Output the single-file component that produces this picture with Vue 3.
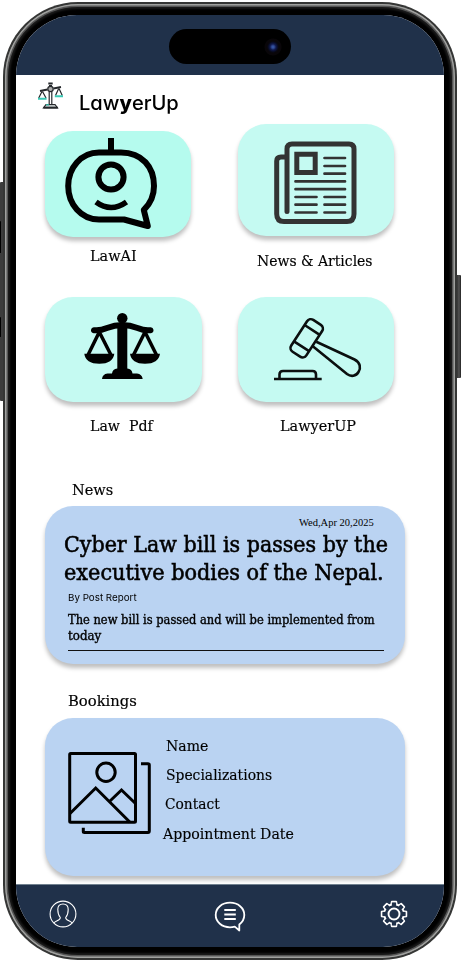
<script setup>
// Scales a single line of text horizontally so that it fills the given width.
const vFit = {
  mounted(el, { value }) {
    el.style.transform = `scaleX(${value / el.offsetWidth})`
  }
}
const fields = [
  { text: 'Name', width: 42 },
  { text: 'Specializations', width: 106.5 },
  { text: 'Contact', width: 55, shift: 'near' },
  { text: 'Appointment Date', width: 131, shift: 'far' }
]
const gearTeeth = [0, 45, 90, 135, 180, 225, 270, 315]
</script>

<template>
  <div class="stage">
    <i class="key action"></i><i class="key up"></i><i class="key down"></i><i class="key power"></i>
    <div class="phone">
      <div class="bezel">
        <main class="screen">
          <header class="status"><div class="island"><span class="camera"></span></div></header>

          <div class="brand">
            <svg class="logo" viewBox="37 81 28 29" fill="none" stroke="#25282b" stroke-width="1.2">
              <path d="M49.2 92V104M51.8 92V104M46 104.5H55L57.5 107.8H43.5Z" fill="#b9bfc0" />
              <path d="M43.5 107.6H57.8" stroke-width="1.8" />
              <path d="M48.3 83.5H52.7M49 86H52" stroke-width="2" />
              <circle cx="50.5" cy="89" r="2.7" fill="#aaa" />
              <path d="M40 91 47.5 89.5M53.5 88.5 61 87" stroke-width="1.8" />
              <path d="M42 91.5 38.7 98M42.5 91.5 46 98M58.7 88.5 55.5 95.5M59 88.5 62.3 95.5" />
              <path d="M38 98.8H46.6M54.8 96.3H63" stroke="#38c9b5" stroke-width="2" />
              <path d="M46 104.8H49" stroke="#38c9b5" />
            </svg>
            <h1 class="line" v-fit="100">Law<b>y</b>erUp</h1>
          </div>

          <section class="tiles">
            <div class="tile first">
              <svg class="card small" viewBox="45 131 145.5 105.5" fill="none" stroke="#000" stroke-width="6">
                <path d="M111 138V152" />
                <path d="M99 152.5H121C142 152.5 154 167 154 186C154 196 150 204 143.8 210L147.8 226L124 219.5H99C81 219.5 68.2 204 68.2 186C68.2 168 81 152.5 99 152.5Z" stroke-linejoin="round" />
                <circle cx="111" cy="177" r="12.6" />
                <path d="M96 202Q111 213 126.5 202" stroke-width="5.5" />
              </svg>
              <span class="line label l1" v-fit="47">LawAI</span>
            </div>
            <div class="tile">
              <svg class="card tall" viewBox="238 124 156.5 112" fill="none" stroke="#333" stroke-width="5" stroke-linecap="round">
                <path d="M285 157H281Q276.7 157 276.7 161V214Q276.7 221.5 284 221.5H347Q354 221.5 354 214V149Q354 144 349 144H292Q287 144 287 149V211.5" />
                <path d="M296.8 154.2H315.2V172.5H296.8Z" />
                <path d="M324.5 158H345M324.5 166H345M324.5 173.7H345M295.5 181.4H345M295.5 189.2H345M295.5 197H316.5M324.5 197H345M295.5 204.7H316.5M324.5 204.7H345M295.5 212.5H316.5M324.5 212.5H345" stroke-width="2.7" />
              </svg>
              <span class="line label l2" v-fit="116">News &amp; Articles</span>
            </div>
            <div class="tile">
              <svg class="card" viewBox="45 297 156.5 105">
                <circle cx="122.3" cy="318.2" r="5.2" />
                <path d="M117.3 323H127.3V368.5Q132 369 132.5 373.5H137Q142 374 142.7 379H102Q102.5 374 107.5 373.5H112Q112.5 369 117.3 368.5Z" />
                <path d="M94 330.2Q100 331 107 328Q122.3 322 137.5 328Q144.5 331 150.5 330.2" fill="none" stroke="#000" stroke-width="6" stroke-linecap="round" />
                <path d="M99.3 332 88 355M99.3 332 111 355M145 332 133.5 355M145 332 156.5 355" stroke="#000" stroke-width="3.5" />
                <path d="M84.3 353.7H114.3Q113 363.7 99.3 363.7T84.3 353.7ZM130 353.7H160Q158.5 363.7 145 363.7T130 353.7Z" />
              </svg>
              <span class="line label l3" v-fit="63">Law&nbsp; Pdf</span>
            </div>
            <div class="tile">
              <svg class="card" viewBox="238 297 156.5 105" fill="none" stroke="#0b0f0f" stroke-width="2.6">
                <g transform="translate(306.7 338.3) rotate(33)">
                  <rect x="-9" y="-19" width="18" height="38" rx="4.5" />
                  <path d="M-9-10H9M-9 9.5H9" />
                </g>
                <path d="M316.3 341.8 354.5 359.5C360.5 362.5 361 368 358.5 372C356 376.3 351 377 347 374L312.5 346" />
                <path d="M274 379H321.7M279.5 378V374.5Q279.5 371 283 371H312.5Q316 371 316 374.5V378" />
              </svg>
              <span class="line label l4" v-fit="76">LawyerUP</span>
            </div>
          </section>

          <h2 class="line heading news-heading" v-fit="41">News</h2>
          <article class="panel news">
            <time class="line" v-fit="75">Wed,Apr 20,2025</time>
            <h3>
              <span class="line" v-fit="324">Cyber Law bill is passes by the</span>
              <span class="line" v-fit="320">executive bodies of the Nepal.</span>
            </h3>
            <span class="line author" v-fit="69">By Post Report</span>
            <p>
              <span class="line" v-fit="307">The new bill is passed and will be implemented from</span>
              <span class="line" v-fit="33">today</span>
            </p>
            <hr>
          </article>

          <h2 class="line heading" v-fit="69">Bookings</h2>
          <article class="panel booking">
            <svg class="photo" viewBox="67 751 86 85" fill="none" stroke="#000" stroke-width="3">
              <rect x="69.7" y="753.5" width="65.8" height="68.7" rx="1" />
              <circle cx="106" cy="772.3" r="9.2" />
              <path d="M70 813.5 95.7 788 130 822.3M110 801 121.5 790 135.5 803.5" />
              <path d="M141 763.7H148Q149.3 763.7 149.3 765V831Q149.3 832.5 148 832.5H84.5Q83.3 832.5 83.3 831.5V827.7" />
            </svg>
            <ul>
              <li v-for="f in fields" :key="f.text" :class="f.shift">
                <span class="line" v-fit="f.width">{{ f.text }}</span>
              </li>
            </ul>
          </article>

          <footer class="nav">
            <svg class="ico" viewBox="0 0 32 32" fill="none" stroke="#fff" stroke-width="1.1">
              <circle cx="16" cy="16" r="12.9" />
              <path d="M6.8 25C9 22.5 13.5 22.5 13.3 19.5C11.5 17.5 10.8 14.5 10.8 11.5C10.8 8 12.5 6 16 6S21.2 8 21.2 11.5C21.2 14.5 20.5 17.5 18.7 19.5C18.5 22.5 23 22.5 25.2 25" />
            </svg>
            <svg class="ico chat" viewBox="0 0 34 34" fill="none" stroke="#fff" stroke-width="1.8">
              <path d="M26.3 32.5V26.5C29.5 24 31.3 20.8 31.3 17C31.3 10 25 4.700 17 4.700S2.700 10 2.700 17S9 29.300 17 29.300C18.800 29.300 20.300 29 21.800 28.600Z" stroke-linejoin="round" />
              <path d="M11.300 12H22.800M11.300 16.500H22.800M11.300 21H22.800" />
            </svg>
            <svg class="ico" viewBox="0 0 32 32" fill="none" stroke="#fff" stroke-width="1.9">
              <mask id="gear-body">
                <rect width="32" height="32" fill="#fff" stroke="none" />
                <circle cx="16" cy="16" r="8.8" fill="#000" stroke="none" />
                <path v-for="a in gearTeeth" :key="a" :transform="`rotate(${a} 16 16)`" d="M13.9 9V4.5H18.1V9Z" fill="#000" stroke="none" />
              </mask>
              <g mask="url(#gear-body)">
                <circle cx="16" cy="16" r="9.8" />
                <path v-for="a in gearTeeth" :key="a" :transform="`rotate(${a} 16 16)`" d="M13.2 7.5 13.8 3.7H18.2L18.8 7.5" stroke-linejoin="round" />
              </g>
              <circle cx="16" cy="16" r="5.5" />
            </svg>
          </footer>
        </main>
      </div>
    </div>
  </div>
</template>

<style>
body { background: #fff; }
</style>

<style scoped>
* { box-sizing: border-box; }
h1, h2, h3, p, ul, li { margin: 0; padding: 0; font-weight: 400; list-style: none; }
.stage { position: relative; width: 466px; height: 962px; padding: 2px 0 0 3px; overflow: hidden; font-family: "DejaVu Serif", serif; font-stretch: condensed; color: #000; }
.key { position: absolute; width: 4px; background: #3c3c3c; border-radius: 1px; }
.action { left: 0; top: 182px; height: 219px; }
.up { left: 0; top: 221px; width: 1px; height: 32px; background: #000; }
.down { left: 0; top: 317px; width: 1px; height: 20px; background: #000; }
.up, .down { z-index: 1; }
.power { right: 5px; top: 275px; width: 5px; height: 103px; background: linear-gradient(90deg, #222, #555 60%, #222); }
.phone { position: relative; width: 454px; height: 958px; border-radius: 75px; padding: 2px; background: #353635; }
.bezel { height: 100%; border-radius: 73px; padding: 11px; background: #000; box-shadow: inset 0 0 0 1.5px #a0a19f, inset 0 0 0 3px #555, inset 0 0 2px 5px #1b1b1b; }
.screen { width: 428px; height: 932px; border-radius: 61px; background: #fff; overflow: hidden; display: flex; flex-direction: column; }
.line { display: block; width: max-content; white-space: nowrap; transform-origin: left center; }
.status { height: 60px; flex: none; background: #20314a; padding: 14px 0 0 153px; }
.island { width: 122px; height: 35px; border-radius: 18px; background: #000; display: flex; align-items: center; justify-content: flex-end; padding-right: 9px; }
.camera { width: 18px; height: 18px; border-radius: 50%; background: radial-gradient(circle, #3452a0 0 1px, #10194d 3px, #07091a 5px, #090609 6px 8px, #000 9px); }
.brand { height: 49px; flex: none; display: flex; align-items: flex-start; gap: 14px; padding: 6px 0 0 21px; }
.logo { width: 28px; height: 29px; }
h1 { font-family: Inter, sans-serif; font-size: 19.5px; line-height: 28px; font-weight: 500; font-stretch: normal; font-feature-settings: "cv11"; margin-top: 7.5px; }
h1 b { font-weight: 800; }
.tiles { flex: none; display: grid; grid-template-columns: 192.5px 193px; grid-template-rows: 173px 183px; padding-left: 29px; }
.card { display: block; width: 156.5px; height: 105px; background: #c5faf2; border-radius: 28px; box-shadow: 0 4px 4px rgba(0, 0, 0, .25); }
.first { padding-top: 7px; }
.small { width: 145.5px; height: 105.5px; background: #b5fbee; }
.tall { height: 112px; }
.label, .heading, li { -webkit-text-stroke: .15px #000; }
.label { font-size: 15px; line-height: 20px; }
.l1 { margin: 9.5px 0 0 44.5px; }
.l2 { margin: 15px 0 0 19.5px; }
.l3 { margin: 13.5px 0 0 45px; }
.l4 { margin: 14px 0 0 42.5px; }
.heading { font-size: 15px; line-height: 20px; margin-left: 52px; }
.news-heading { margin-left: 56px; }
.panel { flex: none; width: 360px; height: 158px; margin-left: 29px; border-radius: 28px; background: #bad3f2; box-shadow: 0 4px 4px rgba(0, 0, 0, .25); }
.news { margin-top: 6px; margin-bottom: 27px; }
.news { padding: 10px 0 0 19px; }
time { font-family: "Liberation Serif", serif; font-size: 10.5px; line-height: 14px; margin-left: 235px; }
h3 { font-size: 23px; line-height: 28px; -webkit-text-stroke: .55px #000; }
.author { font-family: Inter, sans-serif; font-size: 9.5px; line-height: 14px; margin: 5px 0 0 4px; }
p { font-size: 12px; line-height: 16px; margin: 7px 0 0 4px; -webkit-text-stroke: .35px #000; }
hr { width: 316px; height: 1px; border: 0; background: #111; margin: 6px 0 0 4px; }
.booking { display: flex; margin-top: 7px; padding: 18px 0 0 22px; gap: 13px; }
.photo { width: 86px; height: 85px; margin-top: 15px; }
li { font-size: 14.5px; line-height: 20px; height: 29.2px; }
.near { margin-left: -1px; }
.far { margin-left: -3px; }
.nav { flex: none; margin-top: auto; height: 63px; border-top: 1px solid #71818f; background: #20314a; display: flex; justify-content: space-between; align-items: flex-start; padding: 13px 34.5px 0 31px; }
.ico { width: 32px; height: 32px; }
.chat { width: 34px; height: 34px; margin: 0 -3px 0 1px; }
</style>
